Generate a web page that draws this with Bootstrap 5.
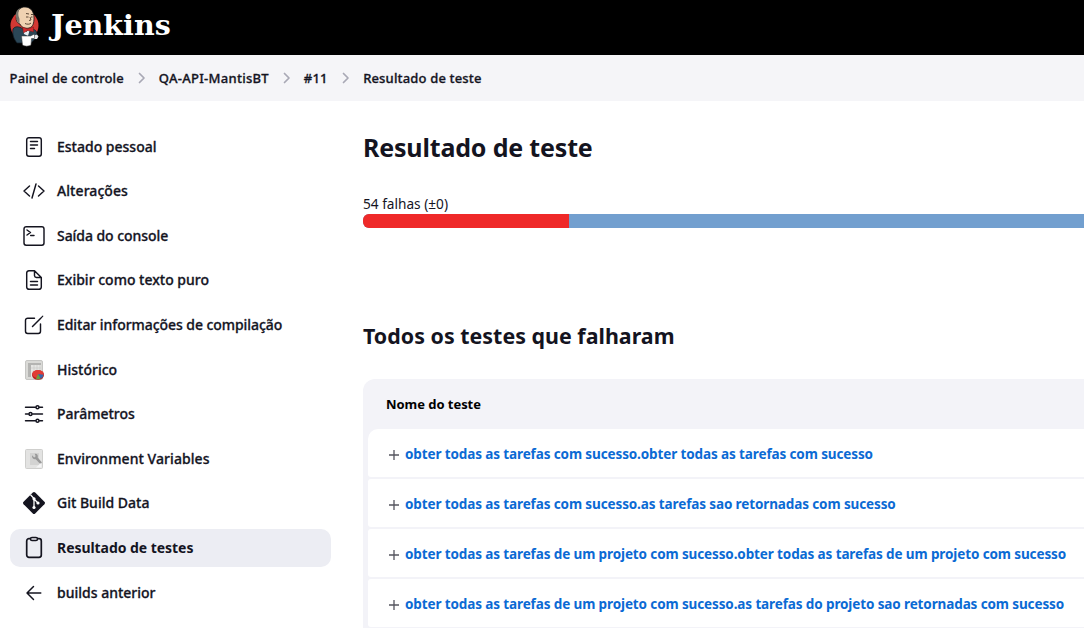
<!DOCTYPE html>
<html lang="pt-BR">
<head>
<meta charset="utf-8">
<meta name="viewport" content="width=device-width, initial-scale=1">
<title>Resultado de teste - Jenkins</title>
<link href="https://cdn.jsdelivr.net/npm/bootstrap@5.3.0/dist/css/bootstrap.min.css" rel="stylesheet">
<style>
  body { font-family: "Noto Sans", "Open Sans", sans-serif; font-size: 14px; line-height: 20px; color: #14141f; background: #fff; overflow: hidden; }
  .top-bar { height: 55px; background: #000; padding: 0 0 1px 9px; }
  .brand-name { font: 700 28.5px/32px "DejaVu Serif", serif; color: #fff; margin: -5px 0 0 10px; }
  .crumbs { height: 46px; background: #f5f5f8; padding-left: 9.600px; font-size: 13px; letter-spacing: .13px; }
  .crumbs a, .side-link { color: #14141f; text-decoration: none; font-weight: 500; -webkit-text-stroke: .3px #14141f; white-space: nowrap; }
  .crumbs svg { width: 35px; height: 14px; flex: none; }
  .crumbs .job-name { letter-spacing: .27px; }
  .crumbs .page-name { letter-spacing: .16px; margin-left: .6px; }
  .side-panel { width: 321px; margin: 26.400px 32px 0 10px; gap: 6px; flex: none; }
  .side-link { height: 38.6px; padding: 0 12px; gap: 11px; border-radius: 10px; }
  .side-link svg { width: 24px; height: 24px; flex: none; }
  .side-link.current { background: #ecedf3; font-weight: 700; -webkit-text-stroke: 0; letter-spacing: -.05px; }
  .side-link.tight { letter-spacing: -.06px; }
  .side-link.loose { letter-spacing: .07px; }
  .line-art { fill: none; stroke: #14141f; stroke-width: 1.45; stroke-linecap: round; stroke-linejoin: round; }
  .main-panel { flex: 1 1 0; min-width: 0; padding-top: 30px; }
  h1 { font-size: 25px; line-height: 32px; font-weight: 700; letter-spacing: -.17px; margin: 0 0 31px; }
  h2 { font-size: 21.4px; line-height: 28px; font-weight: 700; margin: 94px 0 29px; letter-spacing: .02px; }
  .fail-count { font-size: 13.65px; }
  .result-bar { height: 14px; border-radius: 6px 0 0 6px; background: #729fcf; }
  .result-bar .progress-bar { background: #ef2929; }
  .test-table { background: #f3f3f8; border-radius: 12px 0 0 0; padding: 0 0 2px 5px; }
  .test-head { height: 50px; padding-left: 18px; font-size: 13px; font-weight: 700; color: #000; letter-spacing: -.05px; }
  .test-row { height: 48px; margin-bottom: 2px; padding: 2px 0 0 20px; gap: 5px; background: #fff; border-radius: 3px 0 0 3px; }
  .test-row.first-row { border-top-left-radius: 10px; }
  .test-row a { color: #0b6ad4; text-decoration: none; font-weight: 700; font-size: 13.5px; letter-spacing: -.115px; white-space: nowrap; }
  .test-row svg { width: 12px; height: 12px; margin-top: 2px; flex: none; }
</style>
</head>
<body>
<header class="top-bar d-flex align-items-center">
  <svg width="32" height="42" viewBox="0 0 32 42" aria-hidden="true">
    <ellipse cx="15.500" cy="19.500" rx="14" ry="14.500" fill="#d33833"/>
    <path d="M4 23C6 20 10 20 14 23l4 3 4-3c3 0 5 1 6 4l-1 5-5 5H8C5 33 3 29 4 23z" fill="#2b4656" stroke="#101820" stroke-width=".7"/>
    <path d="M14 21l3 5 4-3-2 7-4-2z" fill="#e8eef2"/>
    <path d="M8 8C9 3 12 1 16 1c6 0 9 5 9 11 0 5-1 9-5 10-4 1-8-1-9-4-3-1-5-4-3-10z" fill="#efd2b2" stroke="#151515" stroke-width=".8"/>
    <path d="M8 13C5.500 9 7 4 11 2c-1.500 3-2 5-1.500 8l1 3v4C8.500 17 8 15 8 13z" fill="#77736a"/>
    <path d="M17 7.500l3 .5M22 8.500h2M17 11h2.500M22 11h1.500M21 11l1 3-2 .5M16 17.500c2 1 5 1 6-.5" fill="none" stroke="#4c3929" stroke-width=".9"/>
    <path d="M13.500 21l5 2 6-2v5l-6-1.500-4 2.500z" fill="#d32a2d" stroke="#5a1515" stroke-width=".4"/>
    <path d="M25 29.500l3-1 1.500 2-1.500 2.500h-3z" fill="#e4e6e8"/>
    <path d="M12.500 30h9l3-1.500h1v4h-3l-.5 6.500c-2 1.500-6.500 1.500-8.500 0z" fill="#fff" stroke="#333" stroke-width=".5"/>
  </svg>
  <span class="brand-name">Jenkins</span>
</header>

<nav class="crumbs d-flex align-items-center" aria-label="breadcrumb">
  <a href="#">Painel de controle</a>
  <svg viewBox="0 0 35 14" fill="none" stroke="#a9a9b5" stroke-width="1.7" stroke-linecap="round" stroke-linejoin="round"><path d="M15.500 2.500L20 7l-4.500 4.500"/></svg>
  <a href="#" class="job-name">QA-API-MantisBT</a>
  <svg viewBox="0 0 35 14" fill="none" stroke="#a9a9b5" stroke-width="1.7" stroke-linecap="round" stroke-linejoin="round"><path d="M15.500 2.500L20 7l-4.500 4.500"/></svg>
  <a href="#">#11</a>
  <svg viewBox="0 0 35 14" fill="none" stroke="#a9a9b5" stroke-width="1.7" stroke-linecap="round" stroke-linejoin="round"><path d="M15.500 2.500L20 7l-4.500 4.500"/></svg>
  <a href="#" class="page-name">Resultado de teste</a>
</nav>

<div class="d-flex">
  <aside class="side-panel d-flex flex-column">
    <a href="#" class="side-link d-flex align-items-center">
      <svg class="line-art" viewBox="0 0 24 24"><rect x="4.700" y="2.700" width="14.600" height="18.600" rx="2.200"/><path d="M8.500 6.500h7M8.500 10h7M8.500 13.500h4"/></svg>Estado pessoal</a>
    <a href="#" class="side-link loose d-flex align-items-center">
      <svg class="line-art" viewBox="0 0 24 24"><path d="M7.500 7L2 12l5.500 5M16.500 7l5.500 5-5.500 5M14 5l-4 14"/></svg>Alterações</a>
    <a href="#" class="side-link tight d-flex align-items-center">
      <svg class="line-art" viewBox="0 0 24 24"><rect x="2" y="2.700" width="20" height="18.600" rx="2.200"/><path d="M5 6l3.500 2.500L5 11M8.700 11.500H12"/></svg>Saída do console</a>
    <a href="#" class="side-link d-flex align-items-center">
      <svg class="line-art" viewBox="0 0 24 24"><path d="M12.500 2.700H7A2.300 2.300 0 0 0 4.700 5v14A2.300 2.300 0 0 0 7 21.300h10a2.300 2.300 0 0 0 2.300-2.300V9.500zv5a2 2 0 0 0 2 1.800h4.800M8.500 13.500h7M8.500 17h7"/></svg>Exibir como texto puro</a>
    <a href="#" class="side-link tight d-flex align-items-center">
      <svg class="line-art" viewBox="0 0 24 24"><path d="M12.500 5.200H5.700A2.200 2.200 0 0 0 3.500 7.400v10.900a2.200 2.200 0 0 0 2.200 2.200h10.600a2.200 2.200 0 0 0 2.200-2.200V11M10.500 13.500l8-8"/><path d="M18.500 5.500L20.800 3.200" stroke-width="1.100"/></svg>Editar informações de compilação</a>
    <a href="#" class="side-link d-flex align-items-center">
      <svg viewBox="0 0 24 24"><rect x="3.500" y="2.500" width="17" height="19" rx="1.500" fill="#dadad7" stroke="#c6c6c4"/><path d="M6 5h13v14H6z" fill="#e6e6e4"/><path d="M6 5h13v2H6zM6 5h3v14H6z" fill="#b4b4b2"/><path d="M12 7v8M15 7v6M18 7v6M9 10h10" stroke="#c6c6c4" stroke-width=".6"/><ellipse cx="16" cy="17" rx="6" ry="4.800" fill="#b51d1d"/><ellipse cx="16" cy="16" rx="5.800" ry="4" fill="#e23b35"/><path d="M16 16l5.500.8c-.3 2-1.500 3.200-3 3.900z" fill="#3568ad"/><path d="M16 16l2.500 4.700c-1.500.6-3 .6-4.500.2z" fill="#65a33d"/></svg>Histórico</a>
    <a href="#" class="side-link d-flex align-items-center">
      <svg class="line-art" viewBox="0 0 24 24"><path d="M3.500 5.200h10M17.500 5.200h3M3.500 12h3M10.500 12h10M3.500 18.800h10M17.500 18.800h3"/><circle cx="15.500" cy="5.200" r="1.500"/><circle cx="8.500" cy="12" r="1.500"/><circle cx="15.500" cy="18.800" r="1.500"/></svg>Parâmetros</a>
    <a href="#" class="side-link loose d-flex align-items-center">
      <svg viewBox="0 0 24 24"><rect x="3.500" y="2.500" width="17" height="19" rx="1" fill="#e3e3e2" stroke="#cfcfcd"/><path d="M8 6h9v12H8z" fill="#d3d3d2"/><path d="M10 8.200l2.200 2.200 1.500-1.200-1-2.400c2.300-.4 3.700 1.500 3 3.600l4.300 5-1.300 2-5-5.200c-2 .6-4-1.200-3.700-4z" fill="#999"/><path d="M14 20.500l5.500-5v5z" fill="#f5f5f5"/></svg>Environment Variables</a>
    <a href="#" class="side-link d-flex align-items-center">
      <svg viewBox="0 0 24 24"><path d="M10.800 1.600a1.700 1.700 0 0 1 2.400 0l9.200 9.200a1.700 1.700 0 0 1 0 2.400l-9.200 9.200a1.700 1.700 0 0 1-2.400 0l-9.200-9.200a1.700 1.700 0 0 1 0-2.400z" fill="#14141f"/><path d="M8.500 3.800l3.500 3.700v9M12 8l4 4" fill="none" stroke="#fff" stroke-width="1.300"/><circle cx="12" cy="7.800" r="1.600" fill="#fff"/><circle cx="12" cy="16.500" r="1.600" fill="#fff"/><circle cx="16" cy="12" r="1.600" fill="#fff"/></svg>Git Build Data</a>
    <a href="#" class="side-link current d-flex align-items-center">
      <svg class="line-art" viewBox="0 0 24 24"><rect x="4.700" y="2.700" width="14.600" height="18.700" rx="2.300" stroke-width="1.700"/><rect x="8.500" y="1.500" width="7" height="3" rx="1.500" fill="#ecedf3"/></svg>Resultado de testes</a>
    <a href="#" class="side-link d-flex align-items-center">
      <svg class="line-art" viewBox="0 0 24 24"><path d="M11.500 5.500L5 12l6.500 6.500M5.300 12h13.500"/></svg>builds anterior</a>
  </aside>

  <main class="main-panel">
    <h1>Resultado de teste</h1>
    <div class="fail-count">54 falhas (±0)</div>
    <div class="progress result-bar"><div class="progress-bar" style="width:28.57%"></div></div>
    <h2>Todos os testes que falharam</h2>
    <section class="test-table">
      <div class="test-head d-flex align-items-center">Nome do teste</div>
      <div class="test-row first-row d-flex align-items-center"><svg viewBox="0 0 12 12"><path d="M1 6h10M6 1v10" stroke="#55555f" stroke-width="1.300"/></svg><a href="#">obter todas as tarefas com sucesso.obter todas as tarefas com sucesso</a></div>
      <div class="test-row d-flex align-items-center"><svg viewBox="0 0 12 12"><path d="M1 6h10M6 1v10" stroke="#55555f" stroke-width="1.300"/></svg><a href="#">obter todas as tarefas com sucesso.as tarefas sao retornadas com sucesso</a></div>
      <div class="test-row d-flex align-items-center"><svg viewBox="0 0 12 12"><path d="M1 6h10M6 1v10" stroke="#55555f" stroke-width="1.300"/></svg><a href="#">obter todas as tarefas de um projeto com sucesso.obter todas as tarefas de um projeto com sucesso</a></div>
      <div class="test-row d-flex align-items-center"><svg viewBox="0 0 12 12"><path d="M1 6h10M6 1v10" stroke="#55555f" stroke-width="1.300"/></svg><a href="#">obter todas as tarefas de um projeto com sucesso.as tarefas do projeto sao retornadas com sucesso</a></div>
    </section>
  </main>
</div>
<script src="https://cdn.jsdelivr.net/npm/bootstrap@5.3.0/dist/js/bootstrap.bundle.min.js"></script>
</body>
</html>
